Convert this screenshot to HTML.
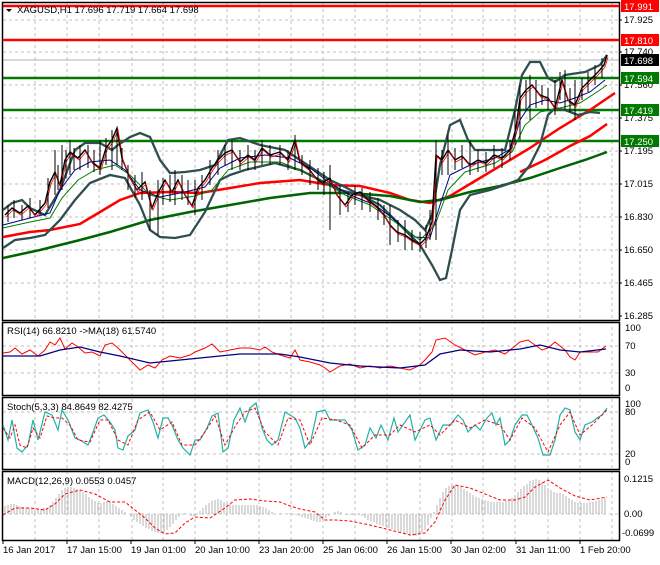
<!DOCTYPE html>
<html><head><meta charset="utf-8"><style>
body{margin:0;background:#fff;width:660px;height:560px;overflow:hidden;font-family:"Liberation Sans",sans-serif}
svg text{font-family:"Liberation Sans",sans-serif;font-size:9.5px;fill:#000}
</style></head><body>
<svg width="660" height="560" xmlns="http://www.w3.org/2000/svg">
<rect width="660" height="560" fill="#fff"/>
<g stroke="#c0c0c0" stroke-dasharray="3,3" stroke-width="1">
<path d="M35 3V540M67 3V540M99 3V540M132 3V540M163 3V540M195 3V540M227 3V540M259 3V540M291 3V540M323 3V540M355 3V540M387 3V540M420 3V540M452 3V540M483 3V540M515 3V540M548 3V540M580 3V540M612 3V540"/>
<path d="M3 20H619M3 52H619M3 85H619M3 118H619M3 151H619M3 184H619M3 217H619M3 250H619M3 283H619"/>
<path d="M3 346H619M3 373H619M3 412H619M3 454H619M3 514H619"/>
</g>
<line x1="3" y1="60" x2="619" y2="60" stroke="#b0b0b0"/>
<g fill="none" stroke="#000" stroke-width="1.5">
<rect x="2.5" y="2.5" width="617" height="318"/>
<rect x="2.5" y="322.5" width="617" height="73"/>
<rect x="2.5" y="397.5" width="617" height="72"/>
<rect x="2.5" y="471.5" width="617" height="69"/>
</g>
<g stroke-width="2.5">
<line x1="3" y1="6" x2="619" y2="6" stroke="#f00"/>
<line x1="3" y1="40" x2="619" y2="40" stroke="#f00"/>
<line x1="3" y1="78" x2="619" y2="78" stroke="#007a00"/>
<line x1="3" y1="110" x2="619" y2="110" stroke="#007a00"/>
<line x1="3" y1="141" x2="619" y2="141" stroke="#007a00"/>
</g>
<path d="M3 237L30 232L50 230L80 224L100 212L120 200L140 193L170 192L200 193L230 188L260 183L300 180L330 185L360 186L390 193L410 200L430 203L450 196L470 184L490 172L510 160L530 148L560 128L590 110L615 93" fill="none" stroke="#f00" stroke-width="2.5"/>
<path d="M520 172L545 160L570 146L590 136L607 124" fill="none" stroke="#f00" stroke-width="2.5"/>
<path d="M3 258L40 250L80 240L110 232L150 220L190 212L230 205L270 198L310 193L350 193L390 196L420 202L440 200L470 192L500 186L530 178L560 168L585 160L607 152" fill="none" stroke="#006400" stroke-width="2.5"/>
<g fill="none" stroke="#2f4f4f" stroke-width="2.3">
<path d="M3 210L12 203L22 200L30 208L45 215L60 190L75 150L85 143L100 143L112 150L118 145L130 137L140 133L150 137L160 160L170 173L185 172L200 170L215 165L228 140L240 138L260 145L285 150L300 160L315 170L330 180L345 187L360 195L380 200L400 210L415 220L425 230L432 215L440 165L450 125L460 120L468 140L475 150L490 150L505 150L515 110L522 75L530 62L540 62L548 78L555 82L565 75L585 72L600 65L607 55"/>
<path d="M3 248L15 240L30 238L45 235L60 220L75 200L90 183L110 175L125 178L140 205L150 230L160 237L175 238L190 235L205 212L220 180L230 175L245 170L275 163L300 170L320 180L340 190L360 195L380 205L400 225L420 245L432 265L440 280L446 278L452 250L460 210L470 195L490 190L505 185L518 180L530 165L540 145L548 115L555 108L565 110L578 115L590 112L600 113"/>
</g>
<path d="M3 225L30 218L50 213L60 190L75 170L90 162L110 160L125 170L140 190L160 197L185 192L205 187L220 168L240 158L265 155L290 158L310 168L330 183L350 195L375 205L395 220L415 237L430 238L440 205L450 175L470 165L495 158L512 148L520 120L530 105L545 100L560 103L575 98L590 92L605 80" fill="none" stroke="#00008b" stroke-width="1"/>
<path d="M3 228L30 222L50 218L62 198L78 180L95 170L115 165L130 175L150 195L170 200L195 196L212 190L228 170L250 162L280 162L300 170L320 180L345 195L370 205L395 222L420 240L435 225L448 190L465 172L495 163L512 152L525 125L540 112L560 108L580 103L600 90L607 85" fill="none" stroke="#008000" stroke-width="1"/>
<path d="M5 215L12 208L20 213L28 206L35 215L45 203L50 182L55 172L60 185L65 160L70 152L78 158L85 150L92 162L100 168L106 148L112 140L117 128L122 158L130 178L137 190L145 182L152 208L158 193L165 180L172 192L178 180L185 195L192 206L198 188L205 180L212 168L218 160L225 153L232 150L240 162L248 155L255 160L262 148L270 155L280 152L288 160L295 140L300 162L308 168L316 178L322 183L330 178L337 195L345 205L352 195L360 192L368 200L376 206L384 215L390 225L397 232L405 235L412 240L420 244L426 238L432 222L436 155L442 160L448 150L455 160L462 156L470 165L478 160L486 163L494 155L502 158L510 150L516 128L520 98L526 90L532 85L540 95L548 98L555 108L562 80L568 100L575 105L582 88L590 80L598 72L604 65L607 55" fill="none" stroke="#000" stroke-width="1.4"/>
<path d="M5 215L12 208L20 213L28 206L35 215L45 203L50 182L55 172L60 185L65 160L70 152L78 158L85 150L92 162L100 168L106 148L112 140L117 128L122 158L130 178L137 190L145 182L152 208L158 193L165 180L172 192L178 180L185 195L192 206L198 188L205 180L212 168L218 160L225 153L232 150L240 162L248 155L255 160L262 148L270 155L280 152L288 160L295 140L300 162L308 168L316 178L322 183L330 178L337 195L345 205L352 195L360 192L368 200L376 206L384 215L390 225L397 232L405 235L412 240L420 244L426 238L432 222L436 155L442 160L448 150L455 160L462 156L470 165L478 160L486 163L494 155L502 158L510 150L516 128L520 98L526 90L532 85L540 95L548 98L555 108L562 80L568 100L575 105L582 88L590 80L598 72L604 65L607 55" fill="none" stroke="#f00" stroke-width="0.8" transform="translate(1,2)"/>
<g stroke="#000" stroke-width="1">
<path d="M8 205V222M14 200V218M22 205V220M30 198V218M40 200V215M48 178V208M55 150V195M58 165V190M62 145V190M66 150V178M70 140V175M74 148V170M80 145V170M88 145V168M94 150V172M100 140V175M106 138V165M112 130V170M117 128V165M122 148V170M128 165V190M135 175V198M142 172V200M150 190V230M158 180V235M163 178V205M170 175V202M175 170V205M182 175V200M188 180V205M195 180V215M202 175V200M210 160V185M218 150V175M225 145V165M232 140V170M240 150V170M248 145V170M255 150V170M262 140V165M270 145V165M280 145V165M288 150V170M295 135V170M302 155V175M310 160V185M318 168V190M324 172V195M330 165V230M340 185V215M348 192V212M355 185V205M362 188V210M370 192V212M378 198V220M384 205V225M390 205V245M398 220V242M405 220V250M412 230V250M420 232V252M426 225V248M430 210V240M436 140V240M442 150V175M448 135V175M455 148V170M462 145V168M470 140V175M478 150V172M486 152V172M494 145V168M502 148V168M510 140V160M515 110V145M520 85V140M526 80V110M530 75V120M536 80V108M542 85V105M548 88V110M555 80V115M560 72V100M565 70V110M570 88V112M575 80V120M582 78V100M588 72V92M595 65V85M602 58V78"/>
</g>
<path d="M6 9L12 9L9 12Z" fill="#000"/>
<text x="17" y="13">XAGUSD,H1  17.696 17.719 17.664 17.698</text>
<text x="7" y="334">RSI(14) 66.8210  -&gt;MA(18) 61.5740</text>
<path d="M3 353L10 352L15 348L22 354L30 350L38 356L45 350L50 342L55 345L60 338L65 349L72 343L78 347L85 353L92 352L100 356L105 345L112 343L118 348L125 355L130 360L135 365L140 370L148 365L155 368L162 360L170 356L180 358L190 355L195 352L205 348L212 344L220 352L230 350L240 348L250 348L260 350L265 347L272 352L280 355L290 358L295 350L300 360L310 362L320 365L325 368L330 372L340 366L350 364L360 368L370 366L380 368L390 366L400 368L410 370L420 365L425 360L432 352L436 340L445 338L455 345L465 350L475 355L485 352L495 350L505 354L515 346L520 342L528 340L535 345L542 350L548 348L555 342L565 350L570 357L575 360L580 352L590 352L598 352L606 346" fill="none" stroke="#f00" stroke-width="1"/>
<path d="M3 356L40 356L60 350L80 347L100 352L120 356L150 363L180 360L210 357L240 354L280 354L300 357L330 363L360 366L400 368L425 365L440 354L460 350L490 352L520 349L540 345L560 350L580 352L606 349" fill="none" stroke="#000080" stroke-width="1.3"/>
<text x="625" y="331">100</text><text x="625" y="349">70</text><text x="625" y="376">30</text><text x="625" y="391">0</text>
<text x="7" y="410">Stoch(5,3,3) 84.8649 82.4275</text>
<path d="M3 425L8 440L12 420L17 448L22 452L28 445L33 420L38 440L45 412L52 415L58 430L62 410L68 420L75 438L80 440L88 445L92 435L98 418L104 415L110 422L115 430L118 448L123 450L128 436L135 430L140 413L148 410L153 422L158 438L163 418L168 418L172 425L178 440L183 448L190 455L195 440L200 440L207 428L212 416L218 413L223 452L228 448L234 420L240 408L245 422L250 408L256 403L262 428L267 440L272 445L278 440L285 412L290 415L295 418L300 428L305 448L311 440L317 412L325 410L330 420L337 420L345 420L352 430L358 450L365 445L370 428L376 438L381 425L388 440L394 418L398 432L410 415L415 440L425 420L430 418L436 440L443 425L450 425L458 415L463 420L468 432L475 425L480 430L487 418L492 413L496 425L500 418L505 445L510 440L515 425L522 415L527 415L532 425L538 438L543 455L550 455L555 440L560 415L565 408L570 410L575 432L580 440L585 425L592 422L597 418L602 415L607 408" fill="none" stroke="#20b2aa" stroke-width="1.2"/>
<path d="M3 428L10 438L15 425L20 445L27 448L33 428L40 438L47 416L55 418L62 418L70 425L78 440L90 442L100 420L108 420L118 440L128 445L138 420L150 412L160 430L172 422L182 445L195 445L205 432L215 416L225 445L236 425L245 412L255 408L265 432L278 445L288 418L300 420L310 445L322 418L336 420L350 425L362 448L375 435L390 435L400 425L415 432L430 425L440 435L455 420L470 428L485 420L500 425L510 440L522 418L535 428L548 452L560 425L570 412L580 435L592 425L607 410" fill="none" stroke="#f00" stroke-width="1" stroke-dasharray="3,2"/>
<text x="625" y="407">100</text><text x="625" y="415">80</text><text x="625" y="457">20</text><text x="625" y="465">0</text>
<text x="7" y="484">MACD(12,26,9) 0.0553 0.0457</text>
<g stroke="#c0c0c0" stroke-width="1.2">
<path d="M5 514V506M8 514V505M11 514V504M14 514V504M17 514V505M20 514V506M23 514V507M26 514V508M29 514V508M32 514V508M35 514V509M38 514V509M41 514V509M44 514V508M47 514V508M50 514V505M53 514V502M56 514V498M59 514V494M62 514V490M65 514V488M68 514V487M71 514V487M74 514V488M77 514V489M80 514V490M83 514V492M86 514V494M89 514V497M92 514V499M95 514V501M98 514V503M101 514V503M104 514V502M107 514V501M110 514V502M113 514V504M116 514V506M119 514V508M122 514V510M125 514V512M128 514V514M131 514V517M134 514V520M137 514V522M140 514V524M143 514V526M146 514V528M149 514V529M152 514V531M155 514V532M158 514V533M161 514V533M164 514V532M167 514V530M170 514V527M173 514V524M176 514V520M179 514V517M182 514V515M185 514V513M188 514V514M191 514V516M194 514V516M197 514V514M200 514V511M203 514V508M206 514V505M209 514V503M212 514V501M215 514V500M218 514V499M221 514V500M224 514V502M227 514V503M230 514V504M233 514V505M236 514V505M239 514V505M242 514V505M245 514V505M248 514V505M251 514V505M254 514V505M257 514V505M260 514V506M263 514V507M266 514V508M269 514V510M272 514V512M275 514V514M278 514V514M281 514V513M284 514V514M287 514V514M290 514V513M293 514V514M296 514V515M299 514V516M302 514V517M305 514V518M308 514V519M311 514V520M314 514V521M317 514V522M320 514V522M323 514V520M326 514V518M329 514V516M332 514V514M335 514V512M338 514V511M341 514V512M344 514V514M347 514V515M350 514V515M353 514V515M356 514V514M359 514V515M362 514V516M365 514V518M368 514V520M371 514V521M374 514V522M377 514V524M380 514V525M383 514V526M386 514V527M389 514V528M392 514V529M395 514V530M398 514V531M401 514V532M404 514V533M407 514V534M410 514V535M413 514V536M416 514V536M419 514V535M422 514V533M425 514V530M428 514V525M431 514V518M434 514V512M437 514V505M440 514V498M443 514V492M446 514V488M449 514V486M452 514V485M455 514V485M458 514V486M461 514V487M464 514V489M467 514V491M470 514V493M473 514V495M476 514V497M479 514V498M482 514V499M485 514V500M488 514V501M491 514V502M494 514V502M497 514V502M500 514V502M503 514V502M506 514V501M509 514V500M512 514V498M515 514V495M518 514V492M521 514V489M524 514V486M527 514V484M530 514V481M533 514V480M536 514V479M539 514V480M542 514V482M545 514V485M548 514V488M551 514V490M554 514V492M557 514V493M560 514V493M563 514V494M566 514V496M569 514V498M572 514V500M575 514V502M578 514V503M581 514V503M584 514V503M587 514V503M590 514V502M593 514V502M596 514V501M599 514V500M602 514V499M605 514V498"/>
</g>
<path d="M3 515L15 508L30 508L45 510L55 504L65 494L80 490L95 494L110 502L125 502L135 510L145 518L155 528L165 534L175 533L185 523L195 517L210 518L225 508L235 500L250 499L265 501L280 502L290 506L300 509L315 512L325 520L335 520L350 521L370 525L390 530L410 535L425 533L435 522L445 500L455 485L470 488L485 494L500 500L515 500L525 497L535 487L548 480L560 488L575 496L590 500L607 497" fill="none" stroke="#f00" stroke-width="1" stroke-dasharray="3,2"/>
<text x="624" y="482">0.1215</text><text x="624" y="517">0.00</text><text x="622" y="536">-0.0699</text>
<g font-size="9.5">
<text x="624" y="23">17.925</text><text x="624" y="55">17.740</text><text x="624" y="88">17.560</text><text x="624" y="121">17.375</text><text x="624" y="154">17.195</text><text x="624" y="187">17.015</text><text x="624" y="220">16.830</text><text x="624" y="253">16.650</text><text x="624" y="286">16.465</text><text x="624" y="319">16.285</text>
</g>
<rect x="621" y="0" width="38" height="12" fill="#f00"/><text x="624" y="10" style="fill:#fff">17.991</text>
<rect x="621" y="34" width="38" height="12" fill="#f00"/><text x="624" y="44" style="fill:#fff">17.810</text>
<rect x="621" y="54" width="38" height="12" fill="#000"/><text x="624" y="64" style="fill:#fff">17.698</text>
<rect x="621" y="72" width="38" height="12" fill="#007a00"/><text x="624" y="82" style="fill:#fff">17.594</text>
<rect x="621" y="104" width="38" height="12" fill="#007a00"/><text x="624" y="114" style="fill:#fff">17.419</text>
<rect x="621" y="135" width="38" height="12" fill="#007a00"/><text x="624" y="145" style="fill:#fff">17.250</text>
<g stroke="#000"><path d="M619 20h3M619 52h3M619 85h3M619 118h3M619 151h3M619 184h3M619 217h3M619 250h3M619 283h3M619 316h3"/>
<path d="M3 540v4M67 540v4M131 540v4M195 540v4M259 540v4M323 540v4M387 540v4M451 540v4M516 540v4M580 540v4"/></g>
<text x="3" y="553">16 Jan 2017</text><text x="67" y="553">17 Jan 15:00</text><text x="131" y="553">19 Jan 01:00</text><text x="195" y="553">20 Jan 10:00</text><text x="259" y="553">23 Jan 20:00</text><text x="323" y="553">25 Jan 06:00</text><text x="387" y="553">26 Jan 15:00</text><text x="451" y="553">30 Jan 02:00</text><text x="516" y="553">31 Jan 11:00</text><text x="580" y="553">1 Feb 20:00</text>
</svg>
</body></html>
